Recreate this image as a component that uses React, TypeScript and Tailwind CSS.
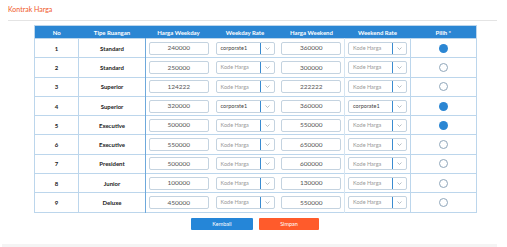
import React from 'react';

type Row = {
  no: number;
  tipe: string;
  weekday: string;
  weekdayRate: string;
  weekend: string;
  weekendRate: string;
  pilih: boolean;
};

const rows: Row[] = [
  { no: 1, tipe: 'Standard', weekday: '240000', weekdayRate: 'corporate1', weekend: '360000', weekendRate: '', pilih: true },
  { no: 2, tipe: 'Standard', weekday: '250000', weekdayRate: '', weekend: '300000', weekendRate: '', pilih: false },
  { no: 3, tipe: 'Superior', weekday: '124222', weekdayRate: '', weekend: '222222', weekendRate: '', pilih: false },
  { no: 4, tipe: 'Superior', weekday: '320000', weekdayRate: 'corporate1', weekend: '360000', weekendRate: 'corporate1', pilih: true },
  { no: 5, tipe: 'Executive', weekday: '500000', weekdayRate: '', weekend: '550000', weekendRate: '', pilih: true },
  { no: 6, tipe: 'Executive', weekday: '550000', weekdayRate: '', weekend: '650000', weekendRate: '', pilih: false },
  { no: 7, tipe: 'President', weekday: '500000', weekdayRate: '', weekend: '600000', weekendRate: '', pilih: false },
  { no: 8, tipe: 'Junior', weekday: '100000', weekdayRate: '', weekend: '130000', weekendRate: '', pilih: false },
  { no: 9, tipe: 'Deluxe', weekday: '450000', weekdayRate: '', weekend: '550000', weekendRate: '', pilih: false },
];

const PriceInput = ({ value }: { value: string }) => (
  <div className="mx-auto h-[13px] w-[60px] rounded-[2px] border border-[#c4d3e0] bg-white flex items-center justify-center text-[6.5px] text-[#555]">
    {value}
  </div>
);

const RateSelect = ({ value }: { value: string }) => (
  <div className="mx-auto h-[13px] w-[59px] rounded-[2px] border border-[#c4d3e0] bg-white flex items-center">
    <span className={`flex-1 pl-[4px] text-[5.5px] ${value ? 'text-[#444]' : 'text-[#9a9a9a]'}`}>
      {value || 'Kode Harga'}
    </span>
    <span className="h-full w-[14px] border-l border-[#3a8bd0] flex items-center justify-center">
      <svg width="5" height="3" viewBox="0 0 5 3" fill="none">
        <path d="M0.5 0.5 L2.5 2.5 L4.5 0.5" stroke="#9aa4ad" strokeWidth="0.7" />
      </svg>
    </span>
  </div>
);

const Radio = ({ checked }: { checked: boolean }) =>
  checked ? (
    <span className="mx-auto block h-[9px] w-[9px] rounded-full bg-[#2b86d3]" />
  ) : (
    <span className="mx-auto block h-[9px] w-[9px] rounded-full border border-[#8fa6ba] bg-white" />
  );

export default function App() {
  return (
    <div className="w-[507px] h-[247px] bg-white font-['Lato','Open_Sans',sans-serif] overflow-hidden">
      <div className="px-[8px] pt-[5px]">
        <h2 className="text-[7px] text-[#f0582a] leading-[9px]">Kontrak Harga</h2>
        <div className="mt-[6px] h-px bg-[#e4e4e4] w-[489px]" />
      </div>

      <table className="ml-[34px] mt-[4px] border-collapse table-fixed w-[442px] border border-[#bcd6ec]">
        <colgroup>
          <col className="w-[44px]" />
          <col className="w-[67px]" />
          <col className="w-[66px]" />
          <col className="w-[67px]" />
          <col className="w-[66px]" />
          <col className="w-[66px]" />
          <col className="w-[66px]" />
        </colgroup>
        <thead>
          <tr className="h-[13px] bg-[#2b86d3] text-white text-[6px] font-bold">
            <th className="p-0">No</th>
            <th className="p-0">Tipe Ruangan</th>
            <th className="p-0">Harga Weekday</th>
            <th className="p-0">Weekday Rate</th>
            <th className="p-0">Harga Weekend</th>
            <th className="p-0">Weekend Rate</th>
            <th className="p-0">Pilih *</th>
          </tr>
        </thead>
        <tbody>
          {rows.map((r) => (
            <tr key={r.no} className="h-[19.3px] border-t border-[#bcd6ec]">
              <td className="p-0 text-center text-[6px] font-bold text-[#222] border-r border-[#bcd6ec]">{r.no}</td>
              <td className="p-0 text-center text-[6px] font-bold text-[#222] border-r border-[#6ea9dc]">{r.tipe}</td>
              <td className="p-0"><PriceInput value={r.weekday} /></td>
              <td className="p-0"><RateSelect value={r.weekdayRate} /></td>
              <td className="p-0 border-r border-[#d6e5f1]"><PriceInput value={r.weekend} /></td>
              <td className="p-0 border-r border-[#bcd6ec]"><RateSelect value={r.weekendRate} /></td>
              <td className="p-0"><Radio checked={r.pilih} /></td>
            </tr>
          ))}
        </tbody>
      </table>

      <div className="mt-[5px] ml-[191px] flex gap-[6px]">
        <button className="h-[12px] w-[62px] rounded-[1px] bg-[#2586d8] text-white text-[5.5px]">Kembali</button>
        <button className="h-[12px] w-[60px] rounded-[1px] bg-[#ff5b2b] text-white text-[5.5px]">Simpan</button>
      </div>

      <div className="mt-[14px] ml-[2px] h-[6px] w-[495px] bg-[#f4f4f4]" />
    </div>
  );
}
